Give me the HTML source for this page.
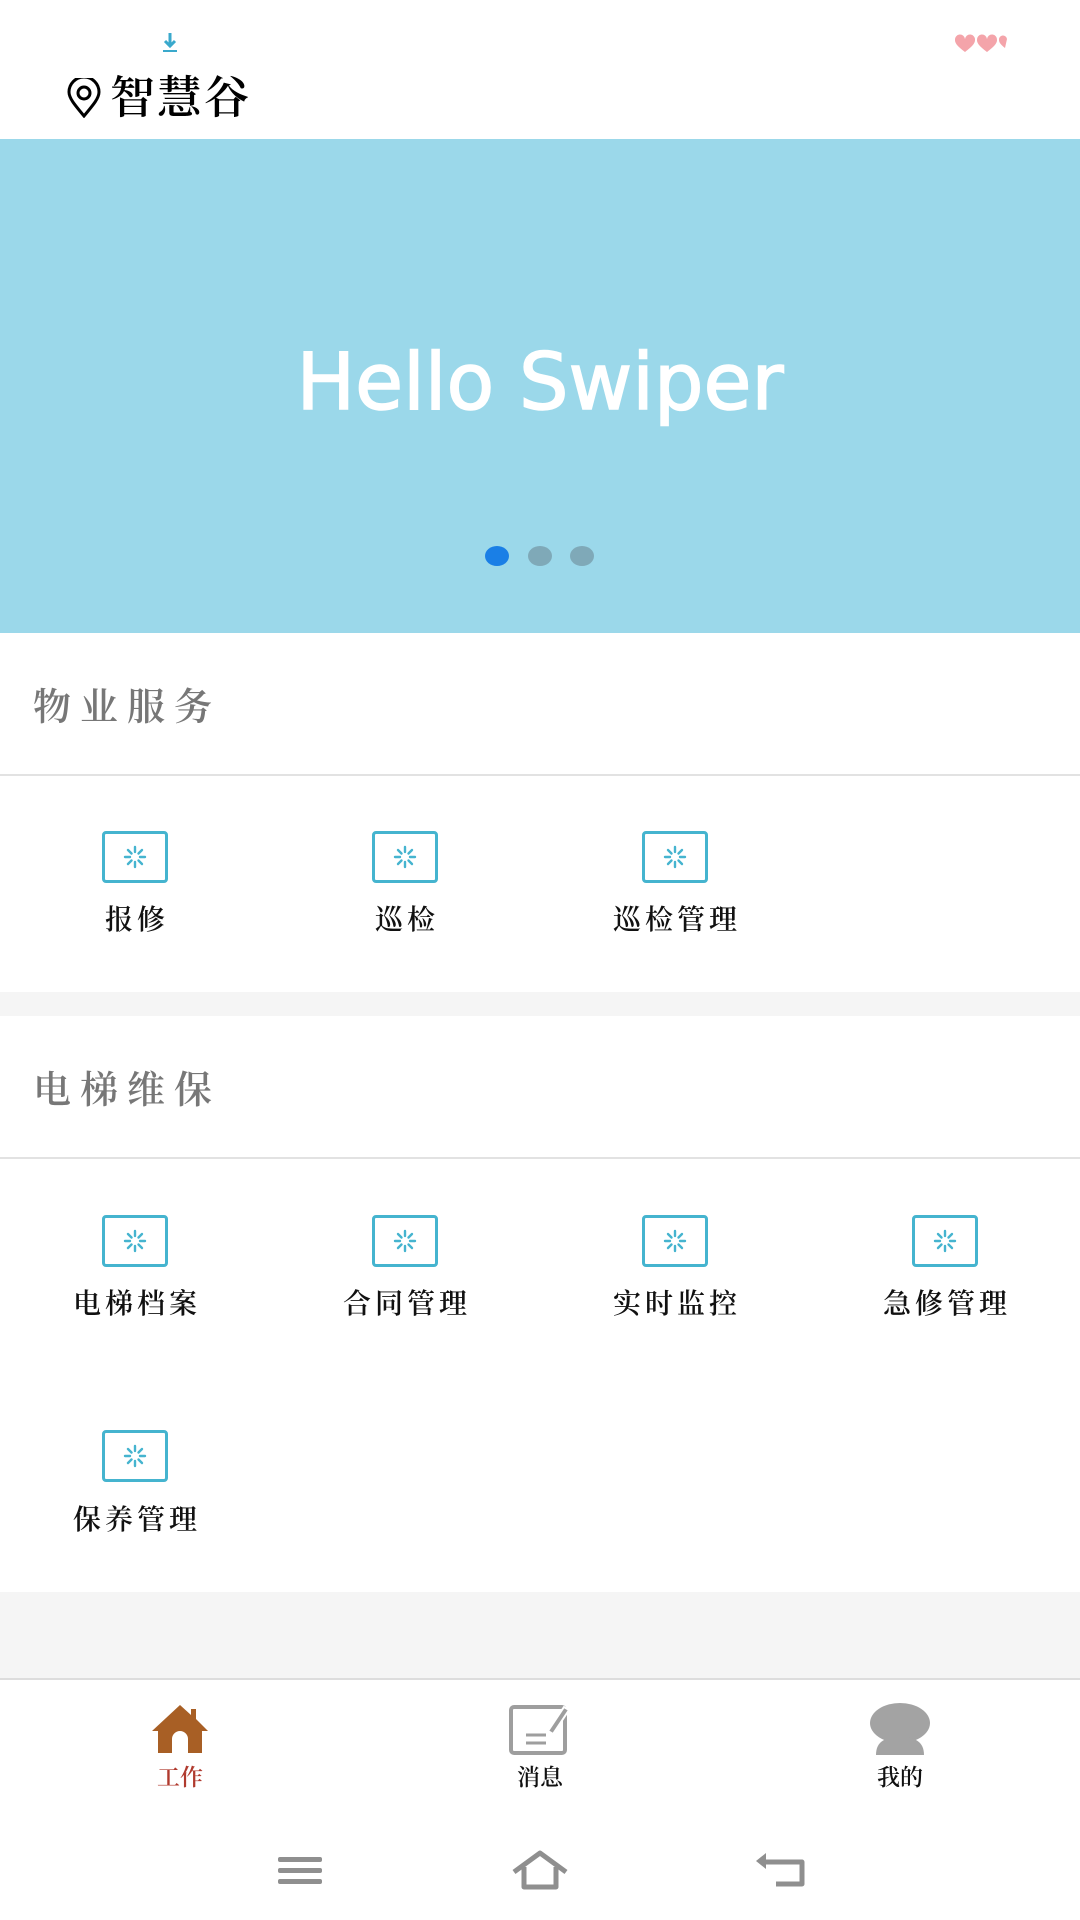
<!DOCTYPE html>
<html><head><meta charset="utf-8"><style>
*{margin:0;padding:0;box-sizing:border-box}
body{width:1080px;height:1920px;background:#f5f5f5;position:relative;overflow:hidden;font-family:"Liberation Serif","Noto Serif CJK SC",serif}
.abs{position:absolute}
.hdr{left:0;top:0;width:1080px;height:139px;background:#fff}
.sw{left:0;top:139px;width:1080px;height:494px;background:#9bd8ea}
.hello{left:0;width:1080px;top:338px;text-align:center;color:#fff;font:400 78px "DejaVu Sans","Liberation Sans",sans-serif;-webkit-text-stroke:1.5px #fff}
.dot{top:546px;width:24px;height:20px;border-radius:50%;background:#7fa9b8}
.sec{left:0;width:1080px;background:#fff}
.title{left:33px;font-size:38px;color:#777;font-family:"Noto Serif CJK SC",serif;font-weight:600;letter-spacing:9px}
.line{left:0;width:1080px;height:2px;background:#e2e2e2}
.ic{width:66px;height:52px;border:3px solid #45b4cf;border-radius:4px;background:#fff}
.lbl{width:270px;text-align:center;font-size:28px;color:#111;font-family:"Noto Serif CJK SC",serif;font-weight:600;letter-spacing:4px;text-indent:4px}
.nav{left:0;top:1678px;width:1080px;height:242px;background:#fff;border-top:2px solid #ddd}
.tl{width:200px;text-align:center;font-size:23px;font-family:"Noto Serif CJK SC",serif;font-weight:600}
</style></head><body>
<div class="abs hdr"></div>
<svg class="abs" style="left:160px;top:32px" width="20" height="22" viewBox="0 0 20 22"><path d="M10 1v12M5 9l5 5 5-5" stroke="#3aa9cc" stroke-width="3" fill="none"/><rect x="3" y="18" width="14" height="2" fill="#3aa9cc"/></svg>
<svg class="abs" style="left:955px;top:34px" width="56" height="20" viewBox="0 0 56 20"><path d="M10 18C2 12 0 9 0 6a5 5 0 0 1 10-1 5 5 0 0 1 10 1c0 3-2 6-10 12z" fill="#f4a4aa"/><path d="M32 18C24 12 22 9 22 6a5 5 0 0 1 10-1 5 5 0 0 1 10 1c0 3-2 6-10 12z" fill="#f4a4aa"/><path d="M50 14C45 10 44 8 44 6a4 4 0 0 1 8-1z" fill="#f4a4aa"/></svg>
<svg class="abs" style="left:66px;top:78px" width="36" height="40" viewBox="0 0 36 40"><path d="M18 38C8 26 3 20 3 14a15 15 0 0 1 30 0c0 6-5 12-15 24z" fill="none" stroke="#000" stroke-width="3"/><circle cx="18" cy="15" r="6" fill="none" stroke="#000" stroke-width="3"/></svg>
<div class="abs" style="left:110px;top:61px;font-size:45px;color:#000;font-family:'Noto Serif CJK SC',serif;font-weight:600;letter-spacing:2px">智慧谷</div>
<div class="abs sw"></div>
<div class="abs hello">Hello Swiper</div>
<div class="abs dot" style="left:485px;background:#1a7fe6"></div>
<div class="abs dot" style="left:528px"></div>
<div class="abs dot" style="left:570px"></div>

<div class="abs sec" style="top:633px;height:359px"></div>
<div class="abs title" style="top:676px">物业服务</div>
<div class="abs line" style="top:774px"></div>

<div class="abs sec" style="top:1016px;height:576px"></div>
<div class="abs title" style="top:1059px">电梯维保</div>
<div class="abs line" style="top:1157px"></div>

<svg width="0" height="0" style="position:absolute"><defs><g id="sp" stroke="#45b4cf" stroke-width="2.4" stroke-linecap="round"><line x1="0" y1="-5" x2="0" y2="-10"/><line x1="0" y1="5" x2="0" y2="10"/><line x1="-5" y1="0" x2="-10" y2="0"/><line x1="5" y1="0" x2="10" y2="0"/><line x1="3.5" y1="-3.5" x2="7" y2="-7"/><line x1="-3.5" y1="3.5" x2="-7" y2="7"/><line x1="-3.5" y1="-3.5" x2="-7" y2="-7"/><line x1="3.5" y1="3.5" x2="7" y2="7"/></g></defs></svg>

<div class="abs ic" style="left:102px;top:831px"><svg width="60" height="46"><use href="#sp" x="30" y="23"/></svg></div>
<div class="abs lbl" style="left:0;top:898px">报修</div>
<div class="abs ic" style="left:372px;top:831px"><svg width="60" height="46"><use href="#sp" x="30" y="23"/></svg></div>
<div class="abs lbl" style="left:270px;top:898px">巡检</div>
<div class="abs ic" style="left:642px;top:831px"><svg width="60" height="46"><use href="#sp" x="30" y="23"/></svg></div>
<div class="abs lbl" style="left:540px;top:898px">巡检管理</div>

<div class="abs ic" style="left:102px;top:1215px"><svg width="60" height="46"><use href="#sp" x="30" y="23"/></svg></div>
<div class="abs lbl" style="left:0;top:1282px">电梯档案</div>
<div class="abs ic" style="left:372px;top:1215px"><svg width="60" height="46"><use href="#sp" x="30" y="23"/></svg></div>
<div class="abs lbl" style="left:270px;top:1282px">合同管理</div>
<div class="abs ic" style="left:642px;top:1215px"><svg width="60" height="46"><use href="#sp" x="30" y="23"/></svg></div>
<div class="abs lbl" style="left:540px;top:1282px">实时监控</div>
<div class="abs ic" style="left:912px;top:1215px"><svg width="60" height="46"><use href="#sp" x="30" y="23"/></svg></div>
<div class="abs lbl" style="left:810px;top:1282px">急修管理</div>

<div class="abs ic" style="left:102px;top:1430px"><svg width="60" height="46"><use href="#sp" x="30" y="23"/></svg></div>
<div class="abs lbl" style="left:0;top:1498px">保养管理</div>

<div class="abs nav"></div>
<svg class="abs" style="left:150px;top:1703px" width="60" height="52" viewBox="0 0 60 52"><path d="M30 2L2 28h6v22h44V28h6L46 16V6h-5v6z" fill="#a85f25"/><path d="M22 50V36a8 8 0 0 1 16 0v14z" fill="#fff"/></svg>
<div class="abs tl" style="left:80px;top:1759px;color:#b03a2e">工作</div>
<svg class="abs" style="left:508px;top:1703px" width="64" height="52" viewBox="0 0 64 52"><rect x="3" y="4" width="54" height="46" rx="3" fill="none" stroke="#9e9e9e" stroke-width="4"/><path d="M18 32h20M18 40h20" stroke="#9e9e9e" stroke-width="3"/><path d="M40 28l16-24 5 3-16 24z" fill="#9e9e9e" stroke="#fff" stroke-width="2"/></svg>
<div class="abs tl" style="left:440px;top:1759px;color:#111">消息</div>
<svg class="abs" style="left:868px;top:1703px" width="64" height="52" viewBox="0 0 64 52"><ellipse cx="32" cy="20" rx="30" ry="20" fill="#a3a3a3"/><path d="M8 52c0-14 10-18 24-18s24 4 24 18z" fill="#a3a3a3"/></svg>
<div class="abs tl" style="left:800px;top:1759px;color:#111">我的</div>

<svg class="abs" style="left:276px;top:1855px" width="48" height="30"><rect x="2" y="2" width="44" height="5" rx="2" fill="#8f8f8f"/><rect x="2" y="13" width="44" height="5" rx="2" fill="#8f8f8f"/><rect x="2" y="24" width="44" height="5" rx="2" fill="#8f8f8f"/></svg>
<svg class="abs" style="left:510px;top:1850px" width="60" height="40"><path d="M4 22L30 3l26 19M14 17v20h32V17" fill="none" stroke="#8f8f8f" stroke-width="5" stroke-linejoin="round"/></svg>
<svg class="abs" style="left:752px;top:1850px" width="56" height="38"><path d="M10 12h40v22H24" fill="none" stroke="#8f8f8f" stroke-width="5" stroke-linejoin="round"/><path d="M4 11l10-8v16z" fill="#8f8f8f"/></svg>
</body></html>
